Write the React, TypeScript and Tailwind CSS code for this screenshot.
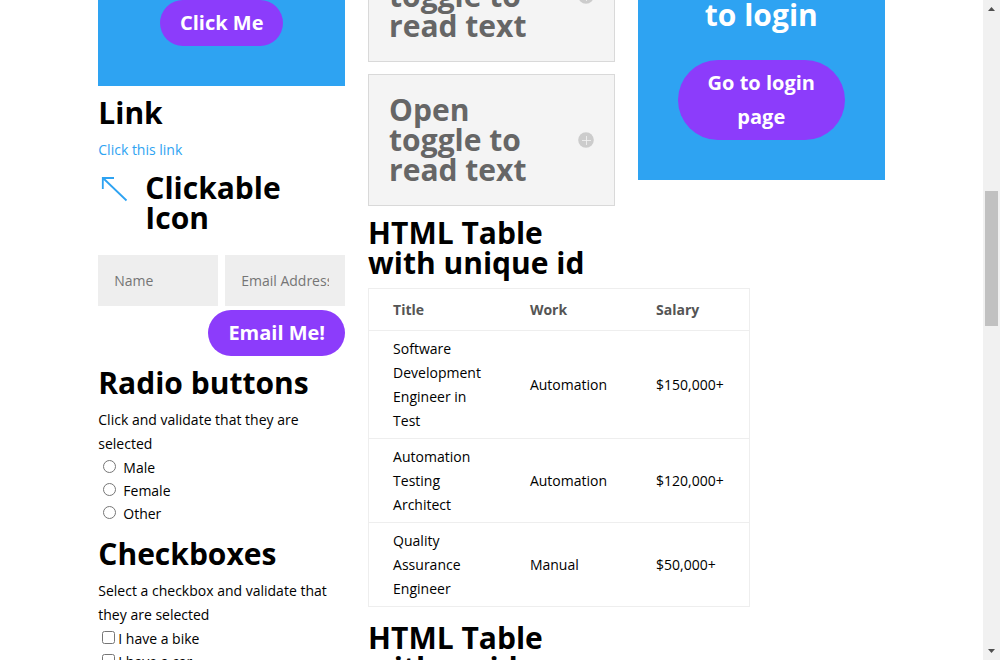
import type { ReactNode } from "react";

const genders = ["Male", "Female", "Other"];
const vehicles = ["I have a bike", "I have a car"];
const jobs = [
  { title: "Software Development Engineer in Test", work: "Automation", salary: "$150,000+" },
  { title: "Automation Testing Architect", work: "Automation", salary: "$120,000+" },
  { title: "Quality Assurance Engineer", work: "Manual", salary: "$50,000+" },
];

function Heading({ children }: { children: ReactNode }) {
  return <h2 className="pb-2.5 text-[30px] leading-[30px] font-bold">{children}</h2>;
}

function PillButton({ children, type = "button" }: { children: ReactNode; type?: "button" | "submit" }) {
  return (
    <button type={type} className="rounded-[40px] bg-[#8c3cfb] px-5 py-1.5 text-[20px] leading-[34px] font-bold text-white">
      {children}
    </button>
  );
}

function Toggle() {
  return (
    <button
      type="button"
      aria-expanded="false"
      className="flex w-full items-center justify-between border border-[#d9d9d9] bg-[#f4f4f4] p-5 text-left text-[#666]"
    >
      <span className="text-[30px] leading-[30px] font-bold">
        Open toggle to read text
      </span>
      <svg viewBox="0 0 16 16" className="ml-8 size-4 shrink-0" aria-hidden="true">
        <circle cx="8" cy="8" r="7.8" fill="#ccc" />
        <path d="M8.5 4v9M4 8.5h9" stroke="#f4f4f4" strokeWidth="0.8" />
      </svg>
    </button>
  );
}

function Scrollbar() {
  return (
    <div className="flex w-[17px] shrink-0 flex-col items-center bg-[#f1f1f1]" aria-hidden="true">
      <svg viewBox="0 0 17 17" className="size-[17px]">
        <path d="M5 11 8.5 7 12 11Z" fill="#505050" />
      </svg>
      <div className="mt-[174px] h-[135px] w-[13px] bg-[#c1c1c1]" />
      <svg viewBox="0 0 17 17" className="mt-auto size-[17px]">
        <path d="M5 6 8.5 10 12 6Z" fill="#505050" />
      </svg>
    </div>
  );
}

export default function App() {
  return (
    <div className="flex h-screen bg-white font-['Open_Sans',sans-serif] text-[14px] leading-6 text-black">
      <main className="flex-1 overflow-hidden">
        <div className="mx-auto grid w-4/5 grid-cols-3 items-start gap-[23px]">
          <div className="min-w-0">
            <div className="mb-3 bg-[#2ea3f2] px-10 pb-10 text-center">
              <PillButton>Click Me</PillButton>
            </div>

            <section className="mb-[11px]">
              <Heading>Link</Heading>
              <a href="#link" className="block text-[#2ea3f2]">Click this link</a>
            </section>

            <section className="mb-3 flex">
              <a href="#icon" aria-label="Clickable Icon" className="w-8 shrink-0">
                <svg viewBox="0 0 32 32" className="size-8" fill="none" stroke="#2ea3f2" strokeWidth="1.8">
                  <path d="M28.5 27.5 5 5M4.8 16V5H16" />
                </svg>
              </a>
              <div className="pl-[15px]">
                <Heading>Clickable Icon</Heading>
              </div>
            </section>

            <form className="mb-3" onSubmit={(e) => e.preventDefault()}>
              <div className="mb-1 grid grid-cols-2 gap-[7px]">
                <input
                  aria-label="Name"
                  placeholder="Name"
                  className="h-[51px] w-full bg-[#eee] px-4 placeholder:text-[#757575]"
                />
                <input
                  aria-label="Email Address"
                  type="email"
                  placeholder="Email Address"
                  className="h-[51px] w-full bg-[#eee] px-4 placeholder:text-[#757575]"
                />
              </div>
              <div className="flex justify-end">
                <PillButton type="submit">Email Me!</PillButton>
              </div>
            </form>

            <section className="mb-3.5">
              <Heading>Radio buttons</Heading>
              <p>Click and validate that they are selected</p>
              {genders.map((g) => (
                <label key={g} className="flex items-center leading-[23px]">
                  <input type="radio" name="gender" className="mr-[7px] mb-0.5 ml-[5px] size-[13px]" />
                  {g}
                </label>
              ))}
            </section>

            <section>
              <Heading>Checkboxes</Heading>
              <p>Select a checkbox and validate that they are selected</p>
              {vehicles.map((v) => (
                <label key={v} className="flex items-center leading-[23px]">
                  <input type="checkbox" className="mr-[3px] mb-0.5 ml-1 size-[13px]" />
                  {v}
                </label>
              ))}
            </section>
          </div>

          <div className="-mt-[70px] min-w-0">
            <div className="mb-3 flex flex-col gap-3">
              <Toggle />
              <Toggle />
            </div>

            <Heading>HTML Table with unique id</Heading>
            <table className="mb-4 w-full border-separate border-spacing-0 border border-[#eee] text-left">
              <thead>
                <tr className="text-[#555]">
                  <th className="pt-[9px] pr-[25px] pb-2 pl-6 font-bold">Title</th>
                  <th className="pt-[9px] pr-[25px] pb-2 pl-6 font-bold">Work</th>
                  <th className="pt-[9px] pr-[25px] pb-2 pl-6 font-bold">Salary</th>
                </tr>
              </thead>
              <tbody>
                {jobs.map((job) => (
                  <tr key={job.title}>
                    <td className="border-t border-[#eee] pt-1.5 pr-[25px] pb-[5px] pl-6">{job.title}</td>
                    <td className="border-t border-[#eee] pt-1.5 pr-[25px] pb-[5px] pl-6">{job.work}</td>
                    <td className="border-t border-[#eee] pt-1.5 pr-[25px] pb-[5px] pl-6">{job.salary}</td>
                  </tr>
                ))}
              </tbody>
            </table>
            <Heading>HTML Table with no id</Heading>
          </div>

          <div className="flex flex-col bg-[#2ea3f2] px-10 pb-10 text-center">
            <div className="mb-5 text-white">
              <Heading>to login</Heading>
            </div>
            <PillButton>Go to login page</PillButton>
          </div>
        </div>
      </main>
      <Scrollbar />
    </div>
  );
}
